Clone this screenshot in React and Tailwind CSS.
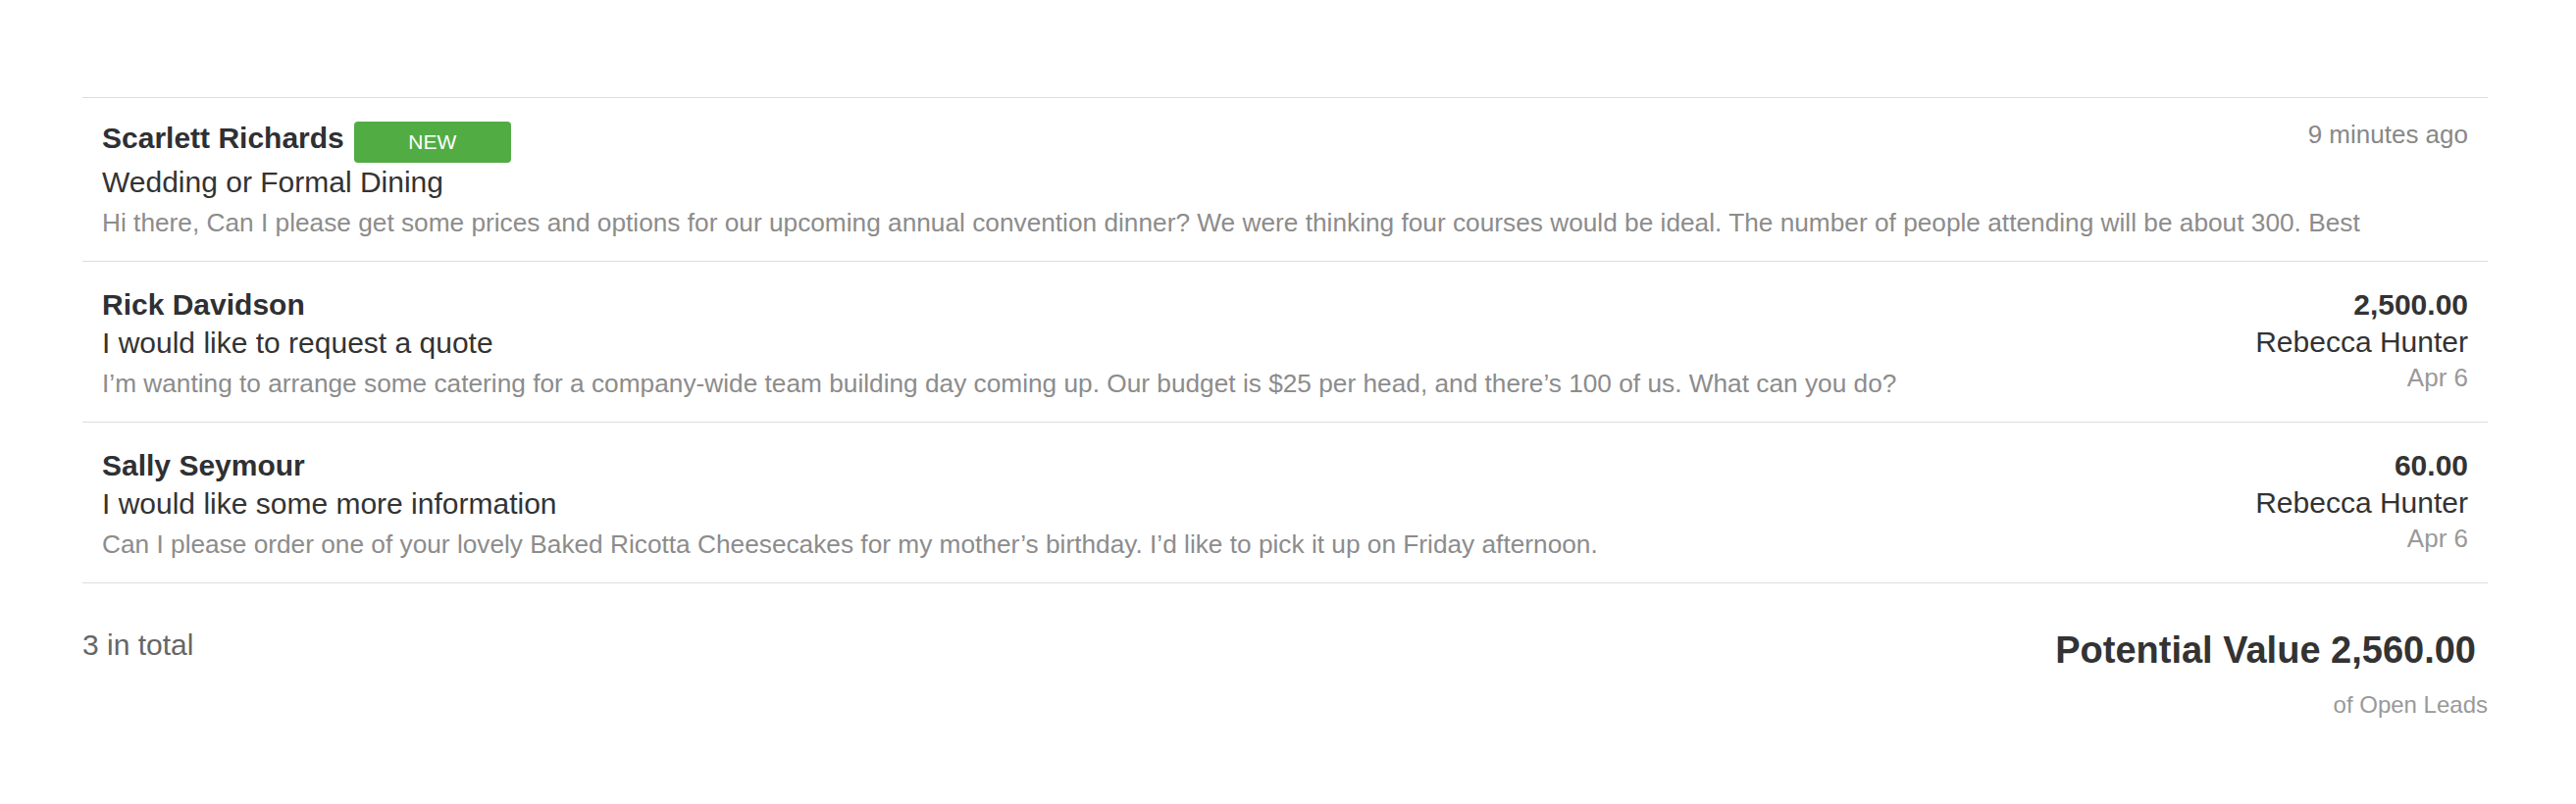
const leads = [
  {
    name: 'Scarlett Richards',
    isNew: true,
    time: '9 minutes ago',
    subject: 'Wedding or Formal Dining',
    snippet:
      'Hi there, Can I please get some prices and options for our upcoming annual convention dinner? We were thinking four courses would be ideal. The number of people attending will be about 300. Best',
  },
  {
    name: 'Rick Davidson',
    amount: '2,500.00',
    owner: 'Rebecca Hunter',
    date: 'Apr 6',
    subject: 'I would like to request a quote',
    snippet:
      'I\u2019m wanting to arrange some catering for a company-wide team building day coming up. Our budget is $25 per head, and there\u2019s 100 of us. What can you do?',
  },
  {
    name: 'Sally Seymour',
    amount: '60.00',
    owner: 'Rebecca Hunter',
    date: 'Apr 6',
    subject: 'I would like some more information',
    snippet:
      'Can I please order one of your lovely Baked Ricotta Cheesecakes for my mother\u2019s birthday. I\u2019d like to pick it up on Friday afternoon.',
  },
]

function LeadRow({ lead }) {
  return (
    <div className="border-b border-[#dddddd] px-[20px] pt-[24px] pb-[19px]">
      {/* right-hand details float beside the first lines */}
      {lead.isNew ? (
        <div className="float-right text-[26px] leading-[26px] text-[#888888]">{lead.time}</div>
      ) : (
        <div className="float-right text-right">
          <div className="text-[30px] leading-[39px] font-bold text-[#333333]">{lead.amount}</div>
          <div className="text-[30px] leading-[37px] text-[#333333]">{lead.owner}</div>
          <div className="text-[26px] leading-[36px] text-[#999999]">{lead.date}</div>
        </div>
      )}

      {lead.isNew ? (
        <div className="flex items-start gap-[10px] h-[42px]">
          <span className="text-[30px] leading-[34px] font-bold text-[#2f3033]">{lead.name}</span>
          <span className="flex items-center justify-center w-[160px] h-[42px] rounded-[4px] bg-[#52ac44] text-white text-[21px]">
            NEW
          </span>
        </div>
      ) : (
        <div className="text-[30px] leading-[39px] font-bold text-[#2f3033]">{lead.name}</div>
      )}

      <div className="text-[30px] leading-[39px] text-[#333333]">{lead.subject}</div>
      <div className="mt-[3px] text-[26.25px] leading-[39px] text-[#8c8c8c] whitespace-nowrap overflow-hidden">
        {lead.snippet}
      </div>
    </div>
  )
}

export default function App() {
  const total = leads.length

  return (
    <div
      className="bg-white min-h-[820px] pt-[99px] pl-[84px] pr-[90px]"
      style={{ fontFamily: '"Liberation Sans", Arial, Helvetica, sans-serif' }}
    >
      <div className="border-t border-[#dddddd]">
        {leads.map((lead) => (
          <LeadRow key={lead.name} lead={lead} />
        ))}
      </div>

      <div className="flex justify-between items-start pt-[43px]">
        <div className="text-[30px] leading-[39px] text-[#666666]">{total} in total</div>
        <div className="text-right pt-[2px]">
          <div className="pr-[12px] text-[38px] leading-[46px] font-bold text-[#333333]">
            Potential Value 2,560.00
          </div>
          <div className="mt-[15px] text-[24px] leading-[36px] text-[#999999]">of Open Leads</div>
        </div>
      </div>
    </div>
  )
}
